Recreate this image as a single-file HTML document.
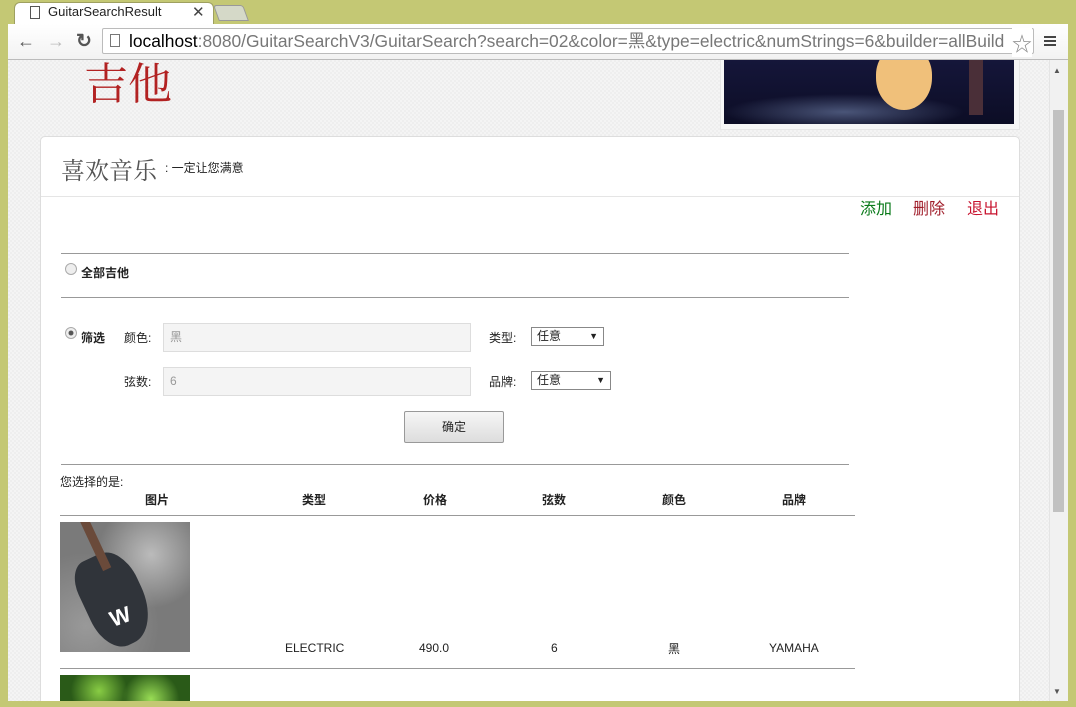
<!DOCTYPE html>
<html><head><meta charset="utf-8"><style>
*{margin:0;padding:0;box-sizing:border-box}
body{width:1076px;height:707px;overflow:hidden;position:relative;background:#c4c874;font-family:"Liberation Sans","Noto Sans CJK SC",sans-serif;font-size:12px;color:#222}
.abs{position:absolute}
.tab{left:14px;top:2px;width:200px;height:28px;background:#fff;border-radius:6px 6px 0 0;border:1px solid #9ea060;border-bottom:none;}
.tab2{left:216px;top:5px;width:30px;height:16px;background:#d5d9c8;border:1px solid #999;border-radius:3px 3px 0 0;transform:skewX(20deg)}
.toolbar{left:8px;top:24px;width:1060px;height:36px;background:linear-gradient(#fff,#f2f2f2);border-bottom:1px solid #bbb}
.url{left:102px;top:28px;width:932px;height:26px;background:#fff;border:1px solid #bbb;border-radius:2px;font-size:17.4px;line-height:24px;padding-left:26px;color:#777;white-space:nowrap;overflow:hidden}
.page{left:8px;top:60px;width:1041px;height:641px;background:#f4f4f4;background-image:linear-gradient(45deg,#eee 25%,transparent 25%,transparent 75%,#eee 75%),linear-gradient(45deg,#eee 25%,transparent 25%,transparent 75%,#eee 75%);background-size:4px 4px;background-position:0 0,2px 2px;overflow:hidden}
.sb{left:1049px;top:60px;width:19px;height:641px;background:#f1f1f1;border-left:1px solid #e4e4e4}
.card{left:32px;top:76px;width:980px;height:600px;background:#fff;border:1px solid #ddd;border-radius:5px}
hr.l{position:absolute;border:none;border-top:1px solid #999;height:0}
.b{font-weight:bold}
.inp{background:#f4f4f4;border:1px solid #ddd;height:29px;color:#999;padding-left:6px;line-height:27px}
.sel{border:1px solid #888;height:19px;background:#fff;line-height:17px;padding-left:5px;font-size:12px}
.sel:after{content:"▼";position:absolute;right:5px;font-size:9px;top:0}
</style></head><body>
<div class="abs tab"></div>
<div class="abs" style="left:30px;top:6px;width:10px;height:13px;border:1px solid #555;background:#fff"></div>
<div class="abs" style="left:48px;top:4px;font-size:13px;color:#222">GuitarSearchResult</div>
<div class="abs" style="left:192px;top:3px;font-size:15px;color:#444">✕</div>
<div class="abs tab2"></div>
<div class="abs toolbar"></div>
<div class="abs" style="left:17px;top:31px;font-size:18px;color:#555;font-weight:bold">←</div>
<div class="abs" style="left:47px;top:31px;font-size:18px;color:#bbb;font-weight:bold">→</div>
<div class="abs" style="left:76px;top:30px;font-size:19px;color:#555;font-weight:bold">↻</div>
<div class="abs url"><span style="color:#000">localhost</span>:8080/GuitarSearchV3/GuitarSearch?search=02&amp;color=黑&amp;type=electric&amp;numStrings=6&amp;builder=allBuild</div>
<div class="abs" style="left:110px;top:34px;width:10px;height:13px;border:1px solid #777;background:#fff"></div>
<div class="abs" style="left:1012px;top:28px;font-size:20px;color:#888;background:#fff">☆</div>
<div class="abs" style="left:1044px;top:36px;width:12px;height:2px;background:#444;box-shadow:0 4px 0 #444,0 8px 0 #444"></div>
<div class="abs page">
 <div class="abs" style="left:76px;top:0;font-size:44px;line-height:50px;color:#b22222;font-family:'Liberation Serif','Noto Serif CJK SC',serif">吉他</div>
 <div class="abs" style="left:712px;top:-2px;width:300px;height:72px;background:#f6f6f6;border:1px solid #e6e6e6"></div>
 <div class="abs" style="left:716px;top:0;width:290px;height:64px;background:radial-gradient(ellipse 120px 18px at 120px 52px,#4a5578,transparent),linear-gradient(#15163a,#0c0d25);overflow:hidden">
  <div class="abs" style="left:152px;top:-14px;width:56px;height:64px;border-radius:45% 45% 50% 50%;background:#f0c07a"></div>
  <div class="abs" style="left:245px;top:0;width:14px;height:55px;background:#4a2f38"></div>
 </div>
 <div class="abs card">
  <div class="abs" style="left:20px;top:14px;font-size:24px;color:#555;font-family:'Liberation Serif','Noto Serif CJK SC',serif">喜欢音乐</div>
  <div class="abs" style="left:124px;top:22px;font-size:12px;color:#222">: 一定让您满意</div>
  <div class="abs" style="left:0;top:59px;width:978px;border-top:1px solid #e5e5e5"></div>
  <div class="abs" style="left:819px;top:58px;font-size:16px;color:#0a7a1a">添加</div>
  <div class="abs" style="left:872px;top:58px;font-size:16px;color:#a01d2a">删除</div>
  <div class="abs" style="left:926px;top:58px;font-size:16px;color:#c81530">退出</div>
  <hr class="l" style="left:20px;top:116px;width:788px">
  <div class="abs" style="left:24px;top:126px;width:12px;height:12px;border-radius:50%;border:1px solid #aaa;background:#eee"></div>
  <div class="abs b" style="left:40px;top:127px">全部吉他</div>
  <hr class="l" style="left:20px;top:160px;width:788px">
  <div class="abs" style="left:24px;top:190px;width:12px;height:12px;border-radius:50%;border:1px solid #aaa;background:radial-gradient(#555 30%,#eee 40%)"></div>
  <div class="abs b" style="left:40px;top:192px">筛选</div>
  <div class="abs" style="left:83px;top:192px">颜色:</div>
  <div class="abs inp" style="left:122px;top:186px;width:308px">黑</div>
  <div class="abs" style="left:448px;top:192px">类型:</div>
  <div class="abs sel" style="left:490px;top:190px;width:73px">任意</div>
  <div class="abs" style="left:83px;top:236px">弦数:</div>
  <div class="abs inp" style="left:122px;top:230px;width:308px">6</div>
  <div class="abs" style="left:448px;top:236px">品牌:</div>
  <div class="abs sel" style="left:490px;top:234px;width:80px">任意</div>
  <div class="abs" style="left:363px;top:274px;width:100px;height:32px;border:1px solid #999;border-radius:2px;background:linear-gradient(#f6f6f6,#ddd);text-align:center;line-height:30px">确定</div>
  <hr class="l" style="left:20px;top:327px;width:788px">
  <div class="abs" style="left:19px;top:336px">您选择的是:</div>
  <div class="abs b" style="left:104px;top:354px">图片</div>
  <div class="abs b" style="left:261px;top:354px">类型</div>
  <div class="abs b" style="left:382px;top:354px">价格</div>
  <div class="abs b" style="left:501px;top:354px">弦数</div>
  <div class="abs b" style="left:621px;top:354px">颜色</div>
  <div class="abs b" style="left:741px;top:354px">品牌</div>
  <hr class="l" style="left:19px;top:378px;width:795px">
  <div class="abs" style="left:19px;top:385px;width:130px;height:130px;background:radial-gradient(circle at 70% 25%,#bbb,transparent 40%),radial-gradient(circle at 20% 80%,#999,transparent 50%),#7a7a7a;overflow:hidden">
   <div class="abs" style="left:24px;top:30px;width:60px;height:95px;background:#30343a;border-radius:30% 40% 50% 40%;transform:rotate(-25deg)"></div>
   <div class="abs" style="left:30px;top:-10px;width:9px;height:60px;background:#6a4a3a;transform:rotate(-25deg)"></div>
   <div class="abs" style="left:50px;top:82px;color:#fff;font-size:22px;font-weight:bold;transform:rotate(-20deg)">W</div>
  </div>
  <div class="abs" style="left:244px;top:504px">ELECTRIC</div>
  <div class="abs" style="left:378px;top:504px">490.0</div>
  <div class="abs" style="left:510px;top:504px">6</div>
  <div class="abs" style="left:627px;top:503px">黑</div>
  <div class="abs" style="left:728px;top:504px">YAMAHA</div>
  <hr class="l" style="left:19px;top:531px;width:795px">
  <div class="abs" style="left:19px;top:538px;width:130px;height:40px;background:radial-gradient(circle at 30% 40%,#8c4,transparent 30%),radial-gradient(circle at 70% 60%,#9d5,transparent 30%),#2a5a18"></div>
 </div>
</div>
<div class="abs sb"></div>
<div class="abs" style="left:1053px;top:66px;font-size:8px;color:#555">▲</div>
<div class="abs" style="left:1053px;top:110px;width:11px;height:402px;background:#c1c1c1"></div>
<div class="abs" style="left:1053px;top:687px;font-size:8px;color:#555">▼</div>
</body></html>
